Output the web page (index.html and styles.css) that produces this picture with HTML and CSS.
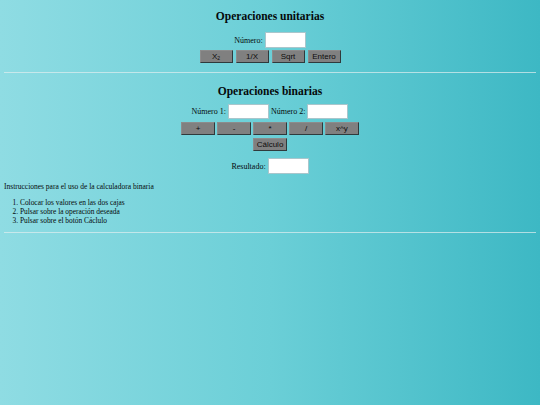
FILE: index.html
```html
<!DOCTYPE html>
<html lang="es">
<head>
<meta charset="utf-8">
<title>Calculadora</title>
<link rel="stylesheet" href="styles.css">
</head>
<body>
<div class="page">
  <h2 class="title title-first">Operaciones unitarias</h2>
  <div class="row row-num">
    <label class="lbl">Número:</label>
    <input class="box box-tall" type="text">
  </div>
  <div class="row row-btns">
    <button class="btn">X<sub class="sub">2</sub></button>
    <button class="btn">1/X</button>
    <button class="btn">Sqrt</button>
    <button class="btn">Entero</button>
  </div>
  <hr class="rule rule-first">
  <h2 class="title title-second">Operaciones binarias</h2>
  <div class="row row-nums">
    <label class="lbl">Número 1:</label>
    <input class="box" type="text">
    <label class="lbl">Número 2:</label>
    <input class="box" type="text">
  </div>
  <div class="row row-ops">
    <button class="btn btn-op">+</button>
    <button class="btn btn-op">-</button>
    <button class="btn btn-op">*</button>
    <button class="btn btn-op">/</button>
    <button class="btn btn-op">x^y</button>
  </div>
  <div class="row row-calc">
    <button class="btn btn-op">Cálculo</button>
  </div>
  <div class="row row-res">
    <label class="lbl">Resultado:</label>
    <input class="box box-tall" type="text">
  </div>
  <p class="intro">Instrucciones para el uso de la calculadora binaria</p>
  <ol class="steps">
    <li>Colocar los valores en las dos cajas</li>
    <li>Pulsar sobre la operación deseada</li>
    <li>Pulsar sobre el botón Cáclulo</li>
  </ol>
  <hr class="rule rule-last">
</div>
</body>
</html>
```
FILE: styles.css
```css
html {
  min-height: 100%;
  background: linear-gradient(to right, #8fdce3 0%, #6bcfd7 50%, #3db8c4 100%);
}
body {
  margin: 0 4px;
  min-height: 405px;
  font-family: "Liberation Serif", "Times New Roman", serif;
  font-size: 8px;
  color: #050a0b;
}
.page {
  display: flex;
  flex-direction: column;
}
.title {
  margin: 0;
  font-size: 11.5px;
  line-height: 14px;
  font-weight: bold;
  text-align: center;
}
.title-first { margin-top: 9px; }
.title-second { margin-top: 11px; }
.row {
  display: flex;
  justify-content: center;
  align-items: center;
  gap: 2px;
}
.lbl {
  line-height: 9px;
}
.row-num { margin-top: 9px; }
.row-btns { margin-top: 2px; gap: 3px; }
.row-nums { margin-top: 6px; }
.row-ops { margin-top: 3px; gap: 2px; }
.row-calc { margin-top: 3px; }
.row-res { margin-top: 7px; }
.box {
  box-sizing: border-box;
  width: 41px;
  height: 15px;
  margin: 0;
  padding: 0;
  background: #ffffff;
  border: 1px solid #a9c6cc;
}
.box-tall { height: 16px; }
.btn {
  box-sizing: border-box;
  width: 33px;
  height: 13px;
  margin: 0;
  padding: 0;
  background: #808080;
  border: 1px solid;
  border-color: #8c8c8c #2f3a3c #2f3a3c #8c8c8c;
  font-family: "Liberation Sans", Arial, sans-serif;
  font-size: 8px;
  line-height: 11px;
  color: #0c0c0c;
}
.btn-op { width: 34px; }
.sub {
  font-size: 5px;
  line-height: 0;
  vertical-align: -1px;
}
.rule {
  height: 0;
  margin: 0;
  border: 0;
  border-top: 1px solid rgba(225, 238, 240, 0.7);
}
.rule-first { margin-top: 9px; }
.rule-last { margin-top: 7px; }
.intro {
  margin: 8px 0 0;
  font-size: 7.5px;
  line-height: 9px;
}
.steps {
  margin: 7px 0 0;
  padding-left: 16px;
  font-size: 7.4px;
}
.steps li {
  line-height: 9px;
}
```
